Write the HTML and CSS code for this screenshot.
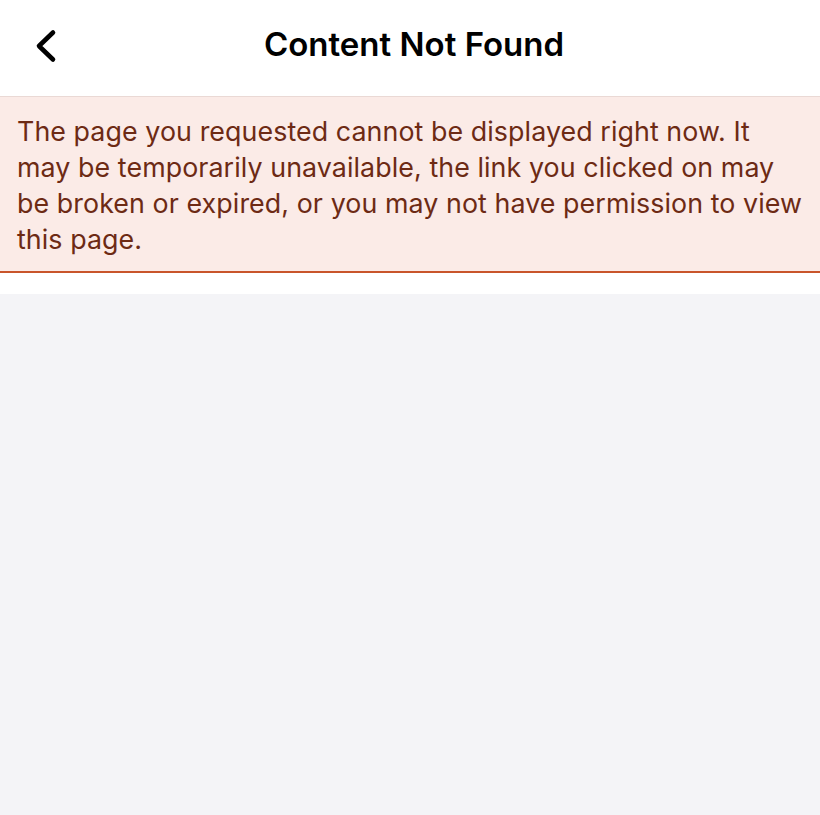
FILE: index.html
```html
<!DOCTYPE html>
<html lang="en">
<head>
<meta charset="utf-8">
<title>Content Not Found</title>
<link rel="stylesheet" href="styles.css">
</head>
<body>
<div class="app">
  <header class="navbar">
    <button class="back" aria-label="Back">
      <svg width="24" height="36" viewBox="0 0 24 36"><path d="M18 3.5 L4 17 L18 30.5" fill="none" stroke="#000" stroke-width="4.6" stroke-linecap="round" stroke-linejoin="round"/></svg>
    </button>
    <h1 class="title">Content Not Found</h1>
    <div class="spacer"></div>
  </header>
  <div class="notice">
    <p>The page you requested cannot be displayed right now. It may be temporarily unavailable, the link you clicked on may be broken or expired, or you may not have permission to view this page.</p>
  </div>
  <div class="gap"></div>
  <main class="content"></main>
</div>
</body>
</html>
```
FILE: styles.css
```css
html, body {
  margin: 0;
  padding: 0;
  height: 100%;
}
body {
  font-family: Inter, "Noto Sans", sans-serif;
  background: #f4f4f7;
}
.app {
  display: flex;
  flex-direction: column;
  min-height: 100%;
}
.navbar {
  height: 97px;
  background: #ffffff;
  border-bottom: 1px solid #ead9d5;
  display: grid;
  grid-template-columns: 80px 1fr 80px;
  align-items: center;
  box-sizing: border-box;
}
.back {
  border: 0;
  background: none;
  padding: 0 0 0 35px;
  height: 36px;
  display: flex;
  align-items: center;
  cursor: pointer;
}
.back svg {
  display: block;
  margin-top: -2px;
}
.title {
  margin: 0;
  text-align: center;
  font-size: 33px;
  font-weight: 600;
  color: #000;
  letter-spacing: 0;
  padding-left: 8px;
  padding-bottom: 8px;
}
.notice {
  background: #fbebe7;
  border-bottom: 2px solid #c9552b;
  padding: 16px 15px 14px 17px;
}
.notice p {
  margin: 0;
  font-size: 26.8px;
  line-height: 36px;
  color: #6d2a14;
  letter-spacing: 0.08px;
}
.gap {
  height: 21px;
  background: #ffffff;
}
.content {
  flex: 1;
  background: #f4f4f7;
}
```
